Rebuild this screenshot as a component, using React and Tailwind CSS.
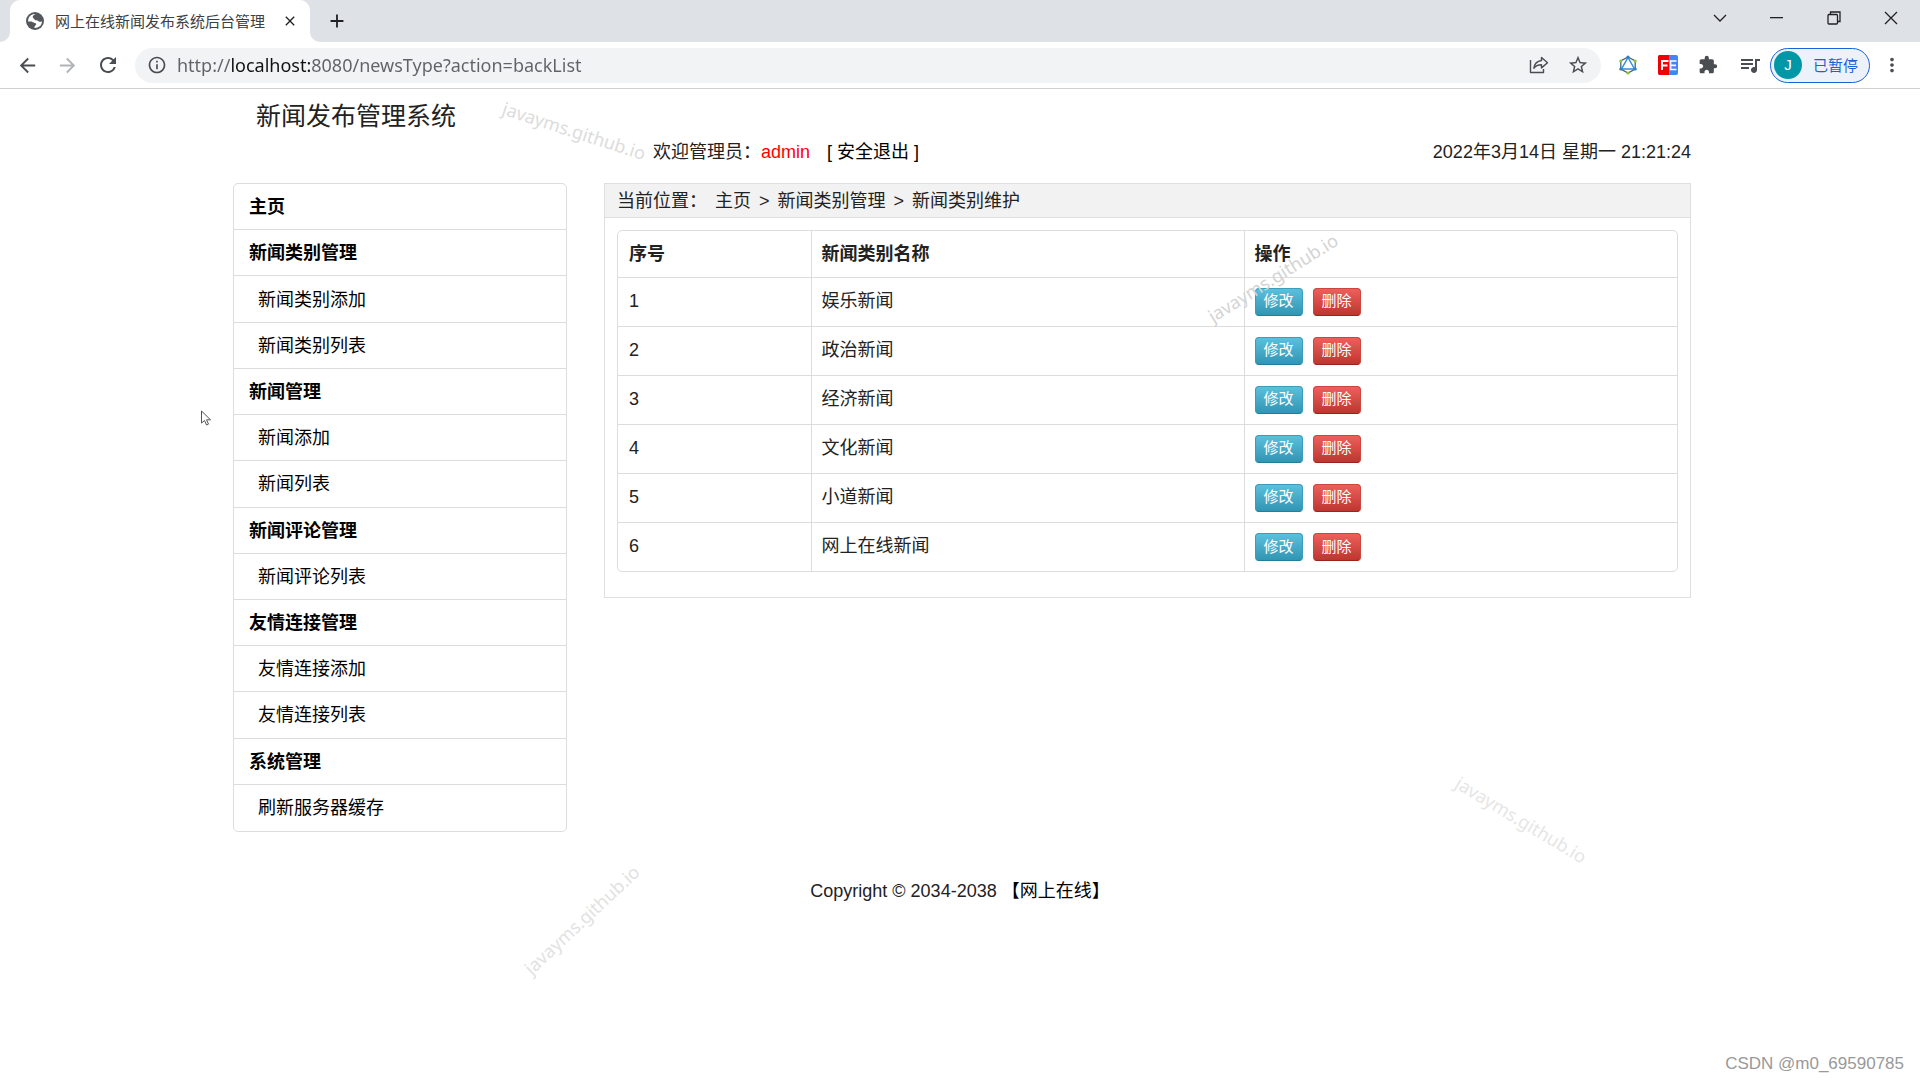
import React from "react";
import {
  MdAdd,
  MdArrowBack,
  MdArrowForward,
  MdClose,
  MdExtension,
  MdInfoOutline,
  MdMoreVert,
  MdQueueMusic,
  MdRefresh,
  MdStarBorder,
} from "react-icons/md";

const menu = [
  { title: "主页", items: [] },
  { title: "新闻类别管理", items: ["新闻类别添加", "新闻类别列表"] },
  { title: "新闻管理", items: ["新闻添加", "新闻列表"] },
  { title: "新闻评论管理", items: ["新闻评论列表"] },
  { title: "友情连接管理", items: ["友情连接添加", "友情连接列表"] },
  { title: "系统管理", items: ["刷新服务器缓存"] },
];

const newsTypes = ["娱乐新闻", "政治新闻", "经济新闻", "文化新闻", "小道新闻", "网上在线新闻"];

function GlobeIcon() {
  return (
    <svg width="18" height="18" viewBox="0 0 18 18" className="shrink-0">
      <circle cx="9" cy="9" r="9" fill="#54585d" />
      <path
        d="M9.300 2c-.9 1.200-2.600 1.400-2.600 2.900 0 1.300 1.400 1.300 1.700 2.300.3 1.100 1.800.9 2.900 1.300 1.200.4 1.500 1.400 2.800 1.300.9 0 1.500-.2 2-.6a7.200 7.200 0 0 1-4.600 6.300c-.9.300-2 .5-3 .4 0-1.400.2-2.100 1.100-2.600.6-.4.900-1.100.4-1.700-.6-.7-1.700-.4-2.500-1-.9-.7-1.700-1.100-3-1.100H1.900A7.100 7.100 0 0 1 9.300 2z"
        fill="#fff"
      />
    </svg>
  );
}

function TabStrip() {
  return (
    <div className="flex h-[42px] items-stretch justify-between bg-[#dee1e6] pr-px pl-[10px]">
      <div className="flex items-center">
        <div className="relative flex h-full w-[300px] items-center rounded-t-[10px] bg-white pr-3 pl-4">
          <GlobeIcon />
          <span className="ml-[11px] grow pt-0.5 text-[15px] whitespace-nowrap text-[#3c4043]">
            网上在线新闻发布系统后台管理
          </span>
          <button aria-label="关闭标签页" className="text-[#202124]">
            <MdClose size={16} />
          </button>
          {/* flared corners of the active tab */}
          <svg className="absolute bottom-0 -left-[10px] h-[10px] w-[10px]" viewBox="0 0 10 10">
            <path d="M10 0v10H0A10 10 0 0 0 10 0z" fill="#fff" />
          </svg>
          <svg className="absolute -right-[10px] bottom-0 h-[10px] w-[10px]" viewBox="0 0 10 10">
            <path d="M0 0v10h10A10 10 0 0 1 0 0z" fill="#fff" />
          </svg>
        </div>
        <button aria-label="新标签页" className="ml-4 text-[#202124]">
          <MdAdd size={22} />
        </button>
      </div>

      {/* WINDOW BUTTONS */}
      <div className="flex h-9 text-[#202124]">
        <button aria-label="搜索标签页" className="flex w-[57px] items-center justify-center">
          <svg width="14" height="8" viewBox="0 0 14 8" fill="none" stroke="currentColor" strokeWidth="1.3">
            <path d="M1 1l6 6 6-6" />
          </svg>
        </button>
        <button aria-label="最小化" className="flex w-[57px] items-center justify-center">
          <svg width="13" height="2" viewBox="0 0 13 2">
            <path d="M0 0h13v1.3H0z" fill="currentColor" />
          </svg>
        </button>
        <button aria-label="还原" className="flex w-[57px] items-center justify-center">
          <svg width="14" height="14" viewBox="0 0 14 14" fill="none" stroke="currentColor" strokeWidth="1.3">
            <rect x="1" y="3.5" width="9.5" height="9.5" rx="1" />
            <path d="M3.5 3.5V1H13v9.5h-2.5" />
          </svg>
        </button>
        <button aria-label="关闭" className="flex w-[57px] items-center justify-center">
          <svg width="14" height="14" viewBox="0 0 14 14" fill="none" stroke="currentColor" strokeWidth="1.3">
            <path d="M1 1l12 12M13 1L1 13" />
          </svg>
        </button>
      </div>
    </div>
  );
}

function ShareIcon() {
  return (
    <svg width="20" height="18" viewBox="0 0 20 18" fill="none" stroke="currentColor" strokeWidth="1.4" strokeLinejoin="round">
      <path d="M1.5 4v12.5h13v-3.5" />
      <path d="M12.5 1.5l6 5.2-6 5.2V8.8c-3.600 0-5.900 1-7.600 3.500.5-4.300 2.900-7.200 7.600-7.800z" />
    </svg>
  );
}

function HexIcon() {
  return (
    <svg width="20" height="20" viewBox="0 0 20 20" fill="none">
      <path d="M10 2l7.200 4v8L10 18l-7.200-4V6z" stroke="#4b6570" strokeWidth="1.300" />
      <path d="M10 2.500L16.500 14h-13z" stroke="#2f8fe0" strokeWidth="1.500" />
      <circle cx="10" cy="2" r="1.600" fill="#2f7fc8" />
      <circle cx="17.200" cy="14" r="1.600" fill="#2f7fc8" />
      <circle cx="2.800" cy="14" r="1.600" fill="#2f7fc8" />
      <circle cx="10" cy="18" r="1.600" fill="#8bc53f" />
      <circle cx="17.200" cy="6" r="1.600" fill="#8bc53f" />
      <circle cx="2.800" cy="6" r="1.600" fill="#8bc53f" />
    </svg>
  );
}

function FeIcon() {
  return (
    <svg width="20" height="20" viewBox="0 0 20 20">
      <rect width="20" height="20" rx="2" fill="#4285f4" />
      <path d="M2 0h9v20H2a2 2 0 0 1-2-2V2a2 2 0 0 1 2-2z" fill="#f00000" />
      <path d="M4 15V6h6.500M4 10.500h5.500" fill="none" stroke="#fff" strokeWidth="2" />
      <path d="M18.500 6h-6v8.500h6M12.500 10.300h5.500" fill="none" stroke="#fff" strokeWidth="1.700" />
    </svg>
  );
}

function Toolbar() {
  return (
    <div className="flex h-[47px] items-center border-b border-[#d0d0d0] bg-white pr-[17px] pl-4 text-[#4a4d51]">
      <div className="flex items-center gap-[17px]">
        <button aria-label="后退">
          <MdArrowBack size={23} />
        </button>
        <button aria-label="前进" className="text-[#b1b3b5]">
          <MdArrowForward size={23} />
        </button>
        <button aria-label="重新加载">
          <MdRefresh size={24} />
        </button>
      </div>

      {/* ADDRESS BAR */}
      <div className="ml-[15px] flex h-[35px] grow items-center rounded-full bg-[#f1f3f4] pr-3 pl-3">
        <MdInfoOutline size={20} className="shrink-0" />
        <input
          type="text"
          aria-label="地址栏"
          defaultValue="http://localhost:8080/newsType?action=backList"
          className="ml-[10px] min-w-0 grow bg-[linear-gradient(90deg,#5f6368_0px,#5f6368_55px,#111_55px,#111_134px,#5f6368_134px)] bg-clip-text font-['Noto_Sans',sans-serif] text-[18px] text-transparent caret-black outline-none"
        />
        <button aria-label="分享此页" className="mr-[18px]">
          <ShareIcon />
        </button>
        <button aria-label="添加书签">
          <MdStarBorder size={22} />
        </button>
      </div>

      <div className="ml-[17px] flex items-center gap-5">
        <button aria-label="GraphQL">
          <HexIcon />
        </button>
        <button aria-label="FeHelper">
          <FeIcon />
        </button>
        <button aria-label="扩展程序">
          <MdExtension size={20} />
        </button>
        <button aria-label="媒体控件">
          <MdQueueMusic size={24} />
        </button>
      </div>
      <button className="ml-2 flex h-[35px] items-center rounded-full border border-[#1a62d8] bg-[#edf1fa] pr-[11px] pl-[3px] text-[15px] text-[#1a62d8]">
        <span className="mr-[11px] flex h-7 w-7 items-center justify-center rounded-full bg-[#0097a7] text-white">
          J
        </span>
        <span className="pt-0.5">已暂停</span>
      </button>
      <button aria-label="更多" className="ml-[11px]">
        <MdMoreVert size={22} />
      </button>
    </div>
  );
}

function Sidebar() {
  return (
    <nav className="w-[334px] shrink-0">
      <ul className="grid min-h-[649px] auto-rows-fr divide-y divide-[#dddddd] rounded-[5px] border border-[#dddddd] text-black">
        {menu.map((group) => (
          <React.Fragment key={group.title}>
            <li className="flex items-center pt-0.5 pl-[15px] font-bold">
              <a href="#">{group.title}</a>
            </li>
            {group.items.map((item) => (
              <li key={item} className="flex items-center pt-0.5 pl-6">
                <a href="#">{item}</a>
              </li>
            ))}
          </React.Fragment>
        ))}
      </ul>
    </nav>
  );
}

function NewsTypeTable() {
  return (
    <div className="overflow-hidden rounded-[5px] border border-[#dddddd]">
      <table className="w-full table-fixed border-collapse text-left">
        <colgroup>
          <col className="w-[193px]" />
          <col />
          <col />
        </colgroup>
        <thead>
          <tr className="h-[46px]">
            <th className="pt-0.5 pl-[11px]">序号</th>
            <th className="border-l border-[#dddddd] pt-0.5 pl-[10px]">新闻类别名称</th>
            <th className="border-l border-[#dddddd] pt-0.5 pl-[10px]">操作</th>
          </tr>
        </thead>
        <tbody>
          {newsTypes.map((name, index) => (
            <tr key={name} className="h-[49px] border-t border-[#dddddd]">
              <td className="pl-[11px]">{index + 1}</td>
              <td className="border-l border-[#dddddd] pl-[10px]">{name}</td>
              <td className="border-l border-[#dddddd] pl-[10px]">
                <div className="flex gap-[10px] text-[15px] text-white">
                  <button className="h-7 w-12 rounded-[4px] border border-[#3a9dba] border-b-[#1f7f9c] bg-linear-to-b from-[#5bc0de] to-[#2f96b4]">
                    修改
                  </button>
                  <button className="h-7 w-12 rounded-[4px] border border-[#cc4640] border-b-[#9a231d] bg-linear-to-b from-[#ee5f5b] to-[#bd362f]">
                    删除
                  </button>
                </div>
              </td>
            </tr>
          ))}
        </tbody>
      </table>
    </div>
  );
}

function MainPanel() {
  return (
    <main className="min-w-0 grow self-start border border-[#dfdfdf]">
      <div className="flex h-[34px] items-center border-b border-[#dfdfdf] bg-[#f2f2f2] pt-0.5 pl-3">
        <span className="mr-2">当前位置：</span>
        <a href="#">主页</a>
        <span className="mx-2">&gt;</span>
        <a href="#">新闻类别管理</a>
        <span className="mx-2">&gt;</span>
        <a href="#">新闻类别维护</a>
      </div>
      <div className="px-3 pt-3 pb-[25px]">
        <NewsTypeTable />
      </div>
    </main>
  );
}

function Watermark({ className }) {
  return (
    <span
      className={`pointer-events-none absolute -translate-x-1/2 -translate-y-1/2 font-['Noto_Sans',sans-serif] text-[18px] whitespace-nowrap ${className}`}
    >
      javayms.github.io
    </span>
  );
}

function App() {
  return (
    <div className="relative min-h-screen overflow-hidden bg-white font-['Liberation_Sans','Noto_Sans_CJK_SC',sans-serif] text-[18px] text-[#222222]">
      <TabStrip />
      <Toolbar />

      <div className="mx-auto max-w-[1462px] pl-1">
        {/* HEADER */}
        <header className="pt-2">
          <h1 className="pl-[23px] text-[25px] leading-[38px]">新闻发布管理系统</h1>
          <div className="mt-[3px] mb-[17px] flex justify-between pl-[420px] leading-7">
            <p>
              欢迎管理员：<span className="text-[#ff0000]">admin</span>
              <a href="#" className="ml-[17px] text-black">
                [ 安全退出 ]
              </a>
            </p>
            <p>2022年3月14日 星期一 21:21:24</p>
          </div>
        </header>

        <div className="flex gap-[37px]">
          <Sidebar />
          <MainPanel />
        </div>
      </div>

      <footer className="mt-[45px] text-center leading-7">
        Copyright © 2034-2038 <a href="#" className="text-black">【网上在线】</a>
      </footer>

      <Watermark className="top-[131px] left-[574px] rotate-[18deg] text-[#dcdcdc]" />
      <Watermark className="top-[278px] left-[1273px] -rotate-[32deg] text-[#d4d4d4]" />
      <Watermark className="top-[820px] left-[1521px] rotate-[31deg] text-[#e6e6e6]" />
      <Watermark className="top-[920px] left-[582px] -rotate-[43deg] text-[#e2e2e2]" />

      {/* mouse pointer */}
      <svg className="absolute top-[410px] left-[200px]" width="12" height="16" viewBox="0 0 12 16">
        <path d="M1.500 1v12l3-2.500 2 4.500 2-.9-2-4.300h4z" fill="#fff" stroke="#555" strokeWidth="1" />
      </svg>

      <span className="absolute right-4 bottom-1 text-[17px] text-[#999999]">
        CSDN @m0_69590785
      </span>
    </div>
  );
}

export default App;
